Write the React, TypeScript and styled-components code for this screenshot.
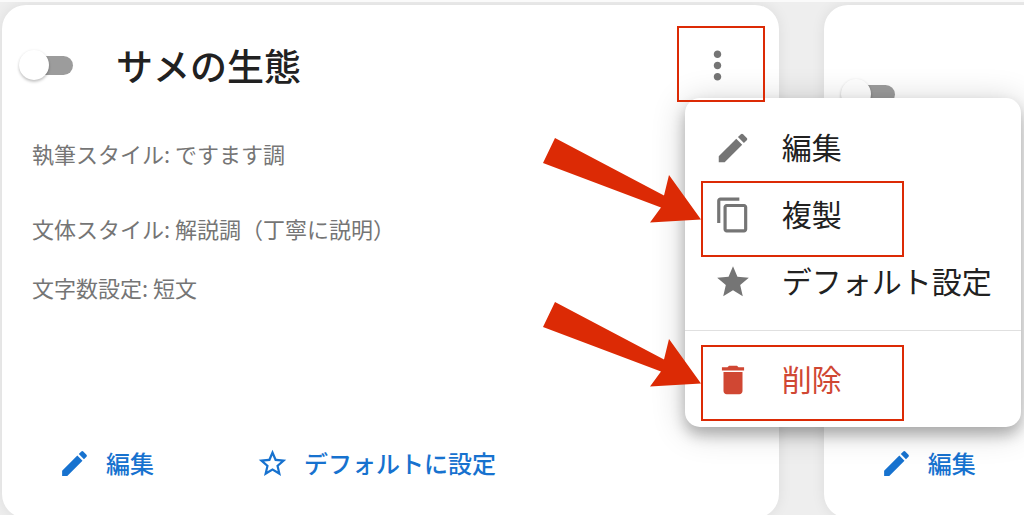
import React from "react";
import styled, { createGlobalStyle } from "styled-components";

const GlobalStyle = createGlobalStyle`
  * { box-sizing: border-box; }
  body {
    margin: 0;
    overflow: hidden;
    background: #eeeeee;
    font-family: "Noto Sans CJK JP", sans-serif;
    color: #212121;
  }
`;

const ACCENT = "#1772cf";
const MARK = "#dc2a05";

const Page = styled.main`
  display: flex;
  gap: 45px;
  height: 100vh;
  min-height: 515px;
  overflow: hidden;
  padding: 3px 0 0 2px;
  border-top: 2px solid #fafafa;
`;

const Card = styled.article`
  flex: 0 0 76%;
  align-self: flex-start;
  display: flex;
  flex-direction: column;
  min-height: 513px;
  padding: 32px 39px 27px 17px;
  border-radius: 24px;
  background: #fff;
  box-shadow: 0 0 14px rgba(0, 0, 0, 0.08);
`;

const Header = styled.header<{ $tall?: boolean }>`
  display: flex;
  align-items: center;
  min-height: ${(p) => (p.$tall ? 114 : 56)}px;
`;

const Switch = styled.input`
  appearance: none;
  position: relative;
  flex: none;
  width: 54px;
  height: 30px;
  margin: 0 43px 0 0;
  cursor: pointer;

  &::before {
    content: "";
    position: absolute;
    inset: 6px 0 5px 3px;
    border-radius: 10px;
    background: #9c9c9c;
  }

  &::after {
    content: "";
    position: absolute;
    top: 0;
    left: 0;
    width: 30px;
    height: 30px;
    border-radius: 50%;
    background: #fff;
    box-shadow: 0 2px 3px rgba(0, 0, 0, 0.22), 0 0 3px rgba(0, 0, 0, 0.06);
  }
`;

const Title = styled.h2`
  flex: 1;
  margin: 0;
  font-size: 37px;
  line-height: 56px;
  font-weight: 500;
`;

const MenuAnchor = styled.div`
  position: relative;
  flex: none;
`;

const IconButton = styled.button`
  display: block;
  padding: 0;
  border: 0;
  background: none;
  color: #757575;
  cursor: pointer;
`;

const Icon = styled.svg<{ $size: number }>`
  display: block;
  flex: none;
  width: ${(p) => p.$size}px;
  height: ${(p) => p.$size}px;
  fill: currentColor;
`;

const Details = styled.div`
  display: grid;
  row-gap: 27px;
  padding: 44px 0 0 13px;
  font-size: 22px;
  line-height: 32px;
  color: #757575;
`;

const Detail = styled.p<{ $spaced?: boolean }>`
  margin: 0 0 ${(p) => (p.$spaced ? 16 : 0)}px;
`;

const Actions = styled.footer`
  display: flex;
  gap: 102px;
  margin-top: auto;
  padding-left: 39px;
`;

const Action = styled.button`
  display: flex;
  align-items: center;
  gap: 15px;
  flex: none;
  padding: 0;
  border: 0;
  background: none;
  color: ${ACCENT};
  font: 500 24px/56px "Noto Sans CJK JP", sans-serif;
  cursor: pointer;
`;

const Menu = styled.div`
  position: absolute;
  z-index: 2;
  top: 55px;
  left: -10px;
  width: 336px;
  padding: 17px 0 13px;
  border-radius: 15px;
  background: #fff;
  box-shadow: 0 8px 14px rgba(0, 0, 0, 0.24), 0 4px 34px rgba(0, 0, 0, 0.2);
`;

const MenuRow = styled.div`
  position: relative;
`;

const MenuItem = styled.button<{ $danger?: boolean }>`
  display: flex;
  align-items: center;
  gap: 30px;
  width: 100%;
  height: 67px;
  padding: 0 0 0 29px;
  border: 0;
  background: none;
  color: ${(p) => (p.$danger ? "#d04733" : "#212121")};
  font: 400 30px/44px "Noto Sans CJK JP", sans-serif;
  white-space: nowrap;
  cursor: pointer;

  svg {
    color: ${(p) => (p.$danger ? "#d04733" : "#757575")};
  }
`;

const MenuLabel = styled.span`
  padding-bottom: 4px;
`;

const Divider = styled.hr`
  margin: 14px 0 16px;
  border: 0;
  border-top: 1px solid #e0e0e0;
`;

const Mark = styled.div<{ $top: number; $left: number; $width: number }>`
  position: absolute;
  z-index: 3;
  top: ${(p) => p.$top}px;
  left: ${(p) => p.$left}px;
  width: ${(p) => p.$width}px;
  height: 76px;
  border: 2px solid ${MARK};
  pointer-events: none;
`;

const ArrowSvg = styled.svg`
  position: absolute;
  top: -46px;
  right: 100%;
  width: 158px;
  height: 86px;
  margin-right: 2px;
  fill: ${MARK};
`;

const paths = {
  edit: "M3 17.25V21h3.75L17.81 9.94l-3.75-3.75L3 17.25zM20.71 7.04c.39-.39.39-1.02 0-1.41l-2.34-2.34a.9959.9959 0 0 0-1.41 0l-1.83 1.83 3.75 3.75 1.83-1.83z",
  copy: "M16 1H4c-1.1 0-2 .9-2 2v14h2V3h12V1zm3 4H8c-1.1 0-2 .9-2 2v14c0 1.1.9 2 2 2h11c1.1 0 2-.9 2-2V7c0-1.1-.9-2-2-2zm0 16H8V7h11v14z",
  star: "M12 17.27 18.18 21l-1.64-7.03L22 9.24l-7.19-.61L12 2 9.19 8.63 2 9.24l5.46 4.73L5.82 21z",
  starBorder:
    "m22 9.24-7.19-.62L12 2 9.19 8.63 2 9.24l5.46 4.73L5.82 21 12 17.27 18.18 21l-1.63-7.03L22 9.24zM12 15.4l-3.76 2.27 1-4.28-3.32-2.88 4.38-.38L12 6.1l1.71 4.04 4.38.38-3.32 2.88 1 4.28L12 15.4z",
  trash: "M6 19c0 1.1.9 2 2 2h8c1.1 0 2-.9 2-2V7H6v12zM19 4h-3.5l-1-1h-5l-1 1H5v2h14V4z",
  more: "M12 8c1.1 0 2-.9 2-2s-.9-2-2-2-2 .9-2 2 .9 2 2 2zm0 2c-1.1 0-2 .9-2 2s.9 2 2 2 2-.9 2-2-.9-2-2-2zm0 6c-1.1 0-2 .9-2 2s.9 2 2 2 2-.9 2-2-.9-2-2-2z",
};

function Glyph({ name, size }: { name: keyof typeof paths; size: number }) {
  return (
    <Icon $size={size} viewBox="0 0 24 24" aria-hidden="true">
      <path d={paths[name]} />
    </Icon>
  );
}

function Arrow() {
  return (
    <ArrowSvg viewBox="0 0 158 86" aria-hidden="true">
      <path d="M12 1 121 58.500 126 38 158 82.500 107 85.500 118 70.500 0 26z" />
    </ArrowSvg>
  );
}

function ContextMenu() {
  return (
    <Menu role="menu">
      <MenuItem role="menuitem">
        <Glyph name="edit" size={38} />
        <MenuLabel>編集</MenuLabel>
      </MenuItem>
      <MenuRow>
        <MenuItem role="menuitem">
          <Glyph name="copy" size={38} />
          <MenuLabel>複製</MenuLabel>
        </MenuItem>
        <Mark $top={-1} $left={16} $width={203}>
          <Arrow />
        </Mark>
      </MenuRow>
      <MenuItem role="menuitem">
        <Glyph name="star" size={38} />
        <MenuLabel>デフォルト設定</MenuLabel>
      </MenuItem>
      <Divider />
      <MenuRow>
        <MenuItem role="menuitem" $danger>
          <Glyph name="trash" size={38} />
          <MenuLabel>削除</MenuLabel>
        </MenuItem>
        <Mark $top={-2} $left={16} $width={203}>
          <Arrow />
        </Mark>
      </MenuRow>
    </Menu>
  );
}

export default function App() {
  return (
    <>
      <GlobalStyle />
      <Page>
        <Card>
          <Header>
            <Switch type="checkbox" role="switch" aria-labelledby="style-title" />
            <Title id="style-title">サメの生態</Title>
            <MenuAnchor>
              <IconButton aria-label="メニュー" aria-haspopup="menu">
                <Glyph name="more" size={45} />
              </IconButton>
              <ContextMenu />
              <Mark $top={-17} $left={-18} $width={88} />
            </MenuAnchor>
          </Header>
          <Details>
            <Detail $spaced>執筆スタイル: ですます調</Detail>
            <Detail>文体スタイル: 解説調（丁寧に説明）</Detail>
            <Detail>文字数設定: 短文</Detail>
          </Details>
          <Actions>
            <Action>
              <Glyph name="edit" size={33} />
              編集
            </Action>
            <Action>
              <Glyph name="starBorder" size={33} />
              デフォルトに設定
            </Action>
          </Actions>
        </Card>
        <Card>
          <Header $tall>
            <Switch type="checkbox" role="switch" aria-label="有効" />
          </Header>
          <Actions>
            <Action>
              <Glyph name="edit" size={33} />
              編集
            </Action>
          </Actions>
        </Card>
      </Page>
    </>
  );
}
